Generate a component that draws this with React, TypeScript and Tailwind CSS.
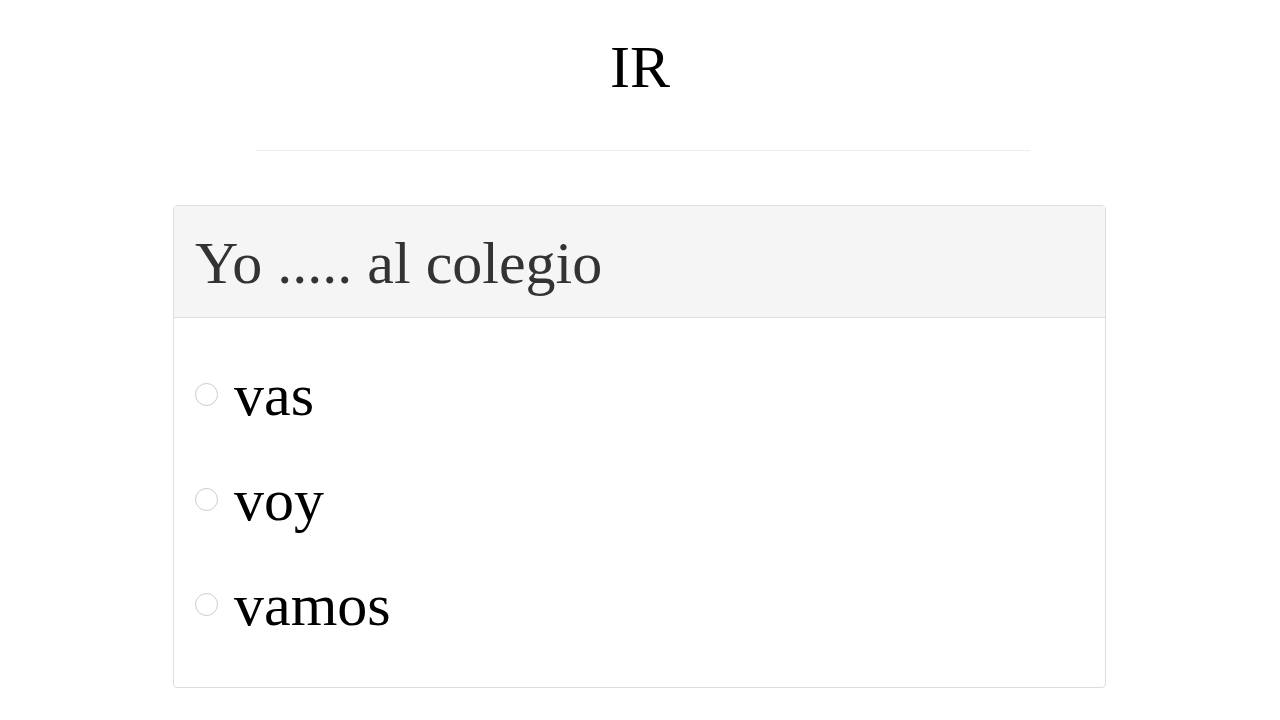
export default function App() {
  const opts = ["vas", "voy", "vamos"];
  return (
    <div className="min-h-[720px] bg-white" style={{ fontFamily: '"Liberation Serif", "Times New Roman", serif' }}>
      <div className="flex flex-col items-center pt-[37px]">
        <h1 className="text-[60px] leading-none text-black">IR</h1>
      </div>
      <div className="ml-[256px] mt-[53px] h-px w-[774px] bg-[#eeeeee]" />
      <div className="ml-[173px] mt-[54px] w-[933px] rounded border border-[#dddddd]">
        <div className="h-[112px] border-b border-[#dddddd] bg-[#f5f5f5] px-[21px] pt-[27px]">
          <div className="text-[60px] leading-none text-[#333333]">Yo ..... al colegio</div>
        </div>
        <div className="px-[21px] pt-[43px] pb-[45px] flex flex-col gap-[34px]">
          {opts.map((o) => (
            <label key={o} className="flex items-start h-[71px]">
              <span className="mt-[22px] block h-[23px] w-[23px] shrink-0 rounded-full border-[1.5px] border-[#cccccc] bg-white" />
              <span className="ml-[16px] mt-[4px] text-[60px] leading-none text-black">{o}</span>
            </label>
          ))}
        </div>
      </div>
    </div>
  );
}
